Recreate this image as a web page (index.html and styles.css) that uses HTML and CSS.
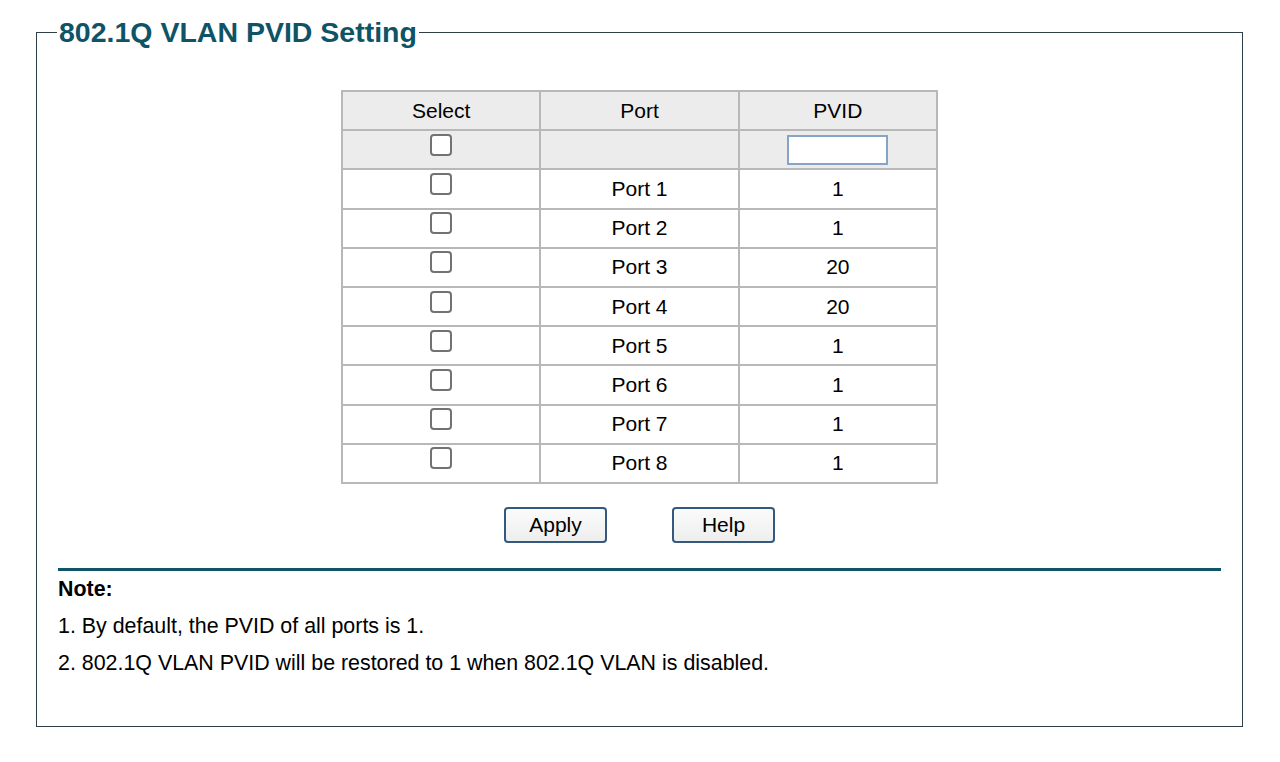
FILE: index.html
```html
<!DOCTYPE html>
<html lang="en">
<head>
<meta charset="utf-8">
<title>802.1Q VLAN PVID Setting</title>
<link rel="stylesheet" href="styles.css">
</head>
<body>
<div class="page">
  <fieldset class="panel">
    <legend class="panel-title">802.1Q VLAN PVID Setting</legend>
    <table class="pvid-table">
      <thead>
        <tr><th>Select</th><th>Port</th><th>PVID</th></tr>
      </thead>
      <tbody>
        <tr class="all-row">
          <td><input type="checkbox" class="chk"></td>
          <td></td>
          <td><input type="text" class="pvid-input"></td>
        </tr>
        <tr><td><input type="checkbox" class="chk"></td><td>Port 1</td><td>1</td></tr>
        <tr><td><input type="checkbox" class="chk"></td><td>Port 2</td><td>1</td></tr>
        <tr><td><input type="checkbox" class="chk"></td><td>Port 3</td><td>20</td></tr>
        <tr><td><input type="checkbox" class="chk"></td><td>Port 4</td><td>20</td></tr>
        <tr><td><input type="checkbox" class="chk"></td><td>Port 5</td><td>1</td></tr>
        <tr><td><input type="checkbox" class="chk"></td><td>Port 6</td><td>1</td></tr>
        <tr><td><input type="checkbox" class="chk"></td><td>Port 7</td><td>1</td></tr>
        <tr><td><input type="checkbox" class="chk"></td><td>Port 8</td><td>1</td></tr>
      </tbody>
    </table>
    <div class="actions">
      <button class="btn" type="button">Apply</button>
      <button class="btn" type="button">Help</button>
    </div>
    <div class="note">
      <div class="note-title">Note:</div>
      <div class="note-line">1. By default, the PVID of all ports is 1.</div>
      <div class="note-line">2. 802.1Q VLAN PVID will be restored to 1 when 802.1Q VLAN is disabled.</div>
    </div>
  </fieldset>
</div>
</body>
</html>
```

FILE: styles.css
```css
html, body {
  margin: 0;
  padding: 0;
  background: #ffffff;
}

body {
  font-family: "Liberation Sans", Arial, sans-serif;
  color: #000000;
}

.page {
  padding: 16px 37px 0 36px;
}

.panel {
  box-sizing: border-box;
  margin: 0;
  padding: 42px 0 51px 0;
  border: 1px solid #2e3f48;
  min-width: 0;
}

.panel-title {
  margin-left: 20px;
  padding: 0 2px;
  font-size: 28.5px;
  line-height: 32px;
  font-weight: bold;
  color: #0e5466;
}

.pvid-table {
  margin: 0 auto;
  width: 597px;
  border-collapse: collapse;
  table-layout: fixed;
  font-size: 21px;
}

.pvid-table th,
.pvid-table td {
  border: 2px solid #b8b8b8;
  height: 37.2px;
  padding: 0;
  text-align: center;
  vertical-align: middle;
  font-weight: normal;
}

.pvid-table thead th,
.all-row td {
  background: #ececec;
}

.chk {
  -webkit-appearance: none;
  appearance: none;
  display: block;
  box-sizing: border-box;
  width: 22px;
  height: 22px;
  margin: 0 auto 10px;
  border: 2px solid #727272;
  border-radius: 4px;
  background: #ffffff;
}

.pvid-input {
  display: block;
  box-sizing: border-box;
  width: 101px;
  height: 30px;
  margin: 0 auto;
  border: 2px solid #86a5c4;
  background: #ffffff;
  padding: 0 4px;
  font: inherit;
}

.actions {
  display: flex;
  justify-content: center;
  gap: 65px;
  margin-top: 23px;
}

.btn {
  box-sizing: border-box;
  width: 103px;
  height: 36px;
  padding: 0;
  border: 2px solid #34597f;
  border-radius: 4px;
  background: linear-gradient(#fbfbfb, #eeeeee);
  font-family: "Liberation Sans", Arial, sans-serif;
  font-size: 21px;
  color: #000000;
}

.note {
  margin: 25px 21px 0;
  border-top: 3px solid #0f5567;
  padding-top: 6px;
  font-size: 21.4px;
}

.note-title {
  font-weight: bold;
  line-height: 24px;
}

.note-line {
  line-height: 24px;
  margin-top: 13px;
}
```
